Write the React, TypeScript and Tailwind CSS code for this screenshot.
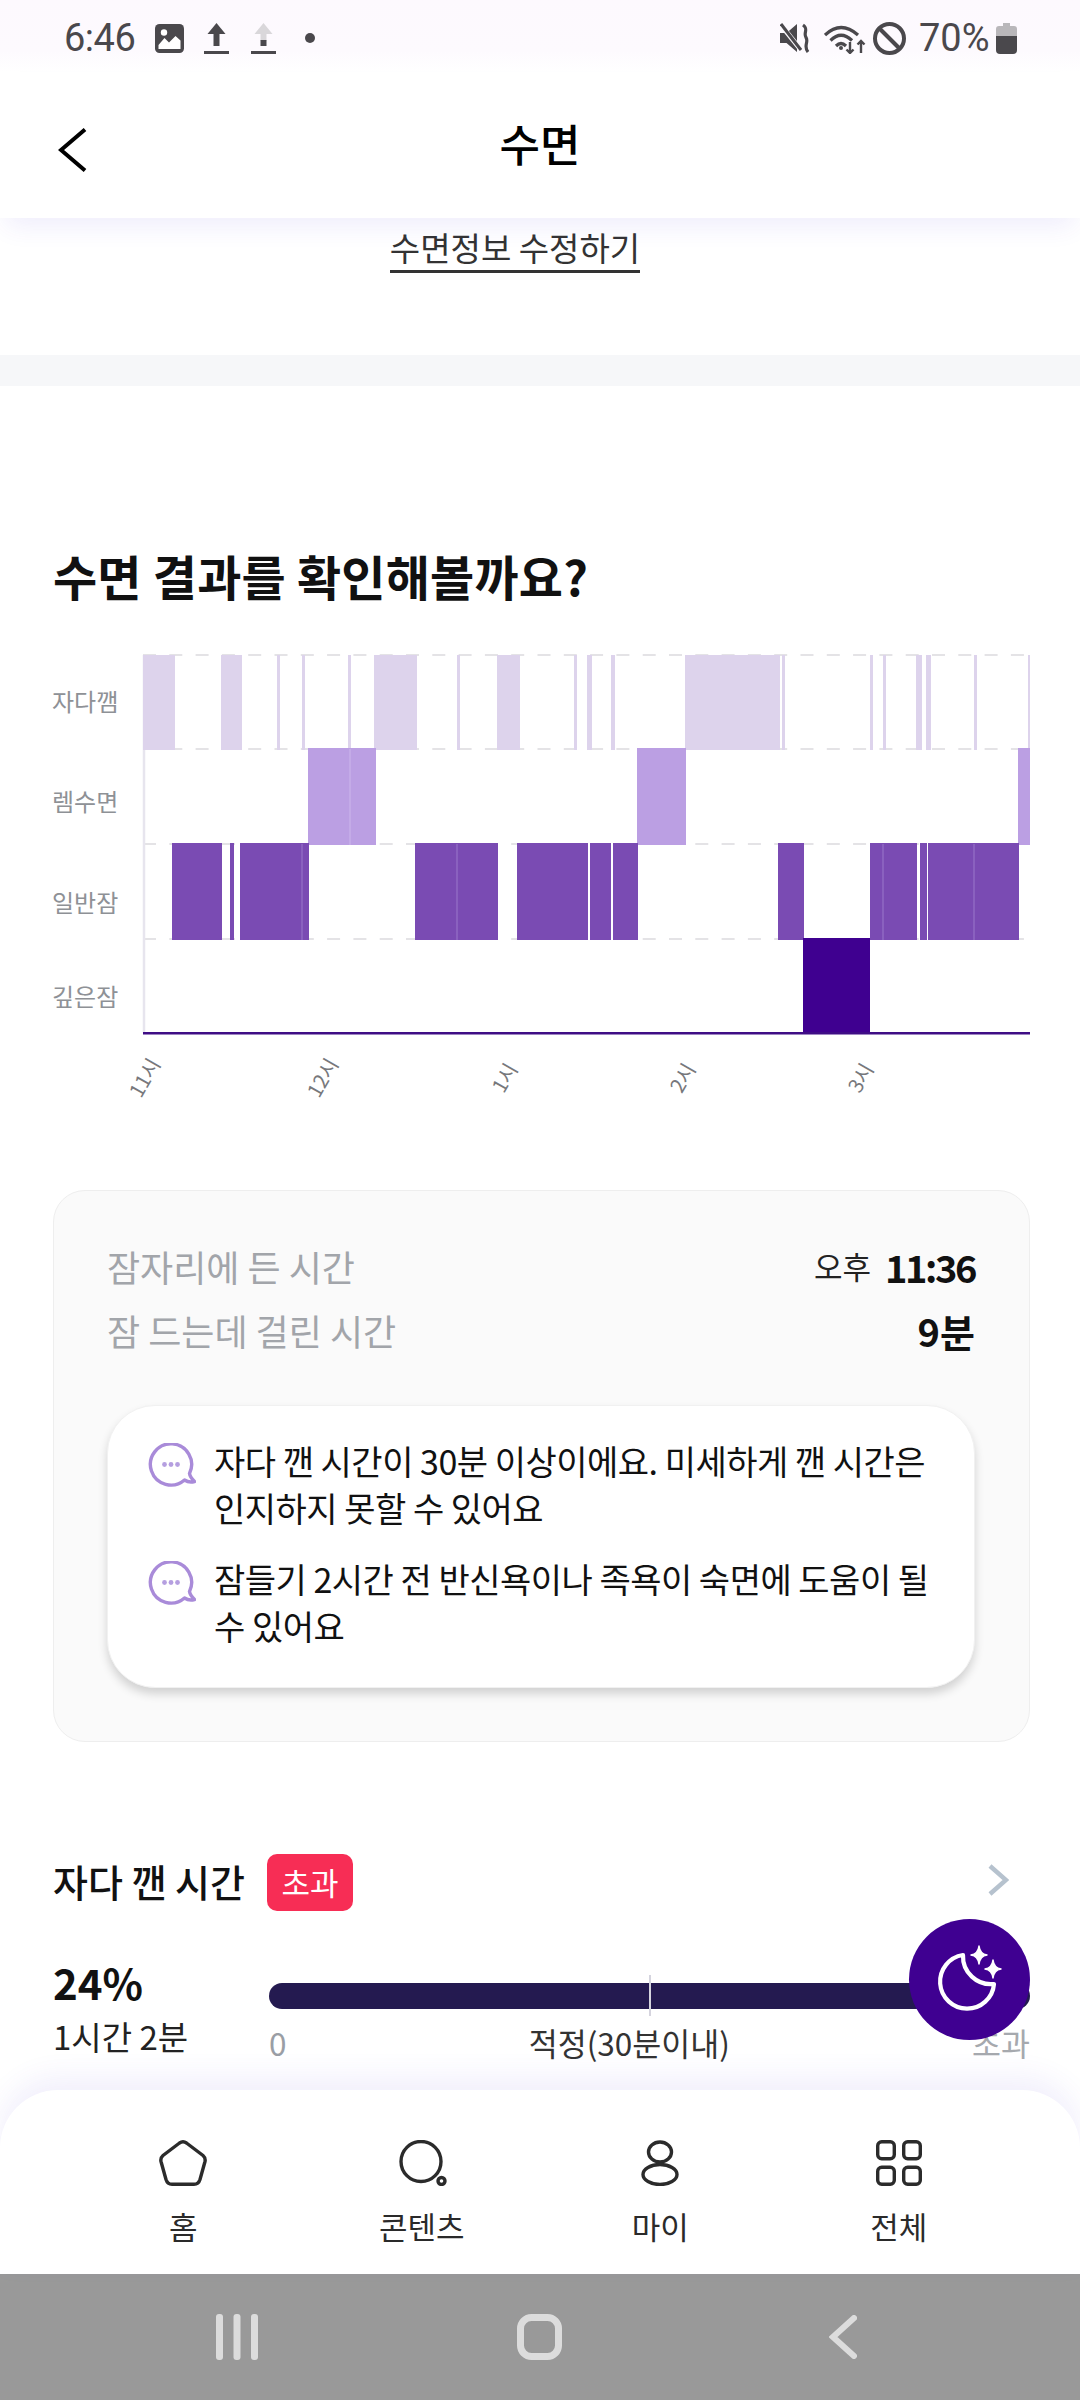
import React from "react";

const wake: [number, number][] = [[143,175],[221,242],[277,280],[302,305],[348,351],[374,417],[457,460],[497,520],[574,577],[587,592],[611,615],[685,780],[782,785],[870,873],[883,886],[916,922],[926,931],[974,977],[1028,1030]];
const rem: [number, number][] = [[308,376],[637,686],[1018,1030]];
const normal: [number, number][] = [[172,222],[230,234],[240,309],[415,498],[517,588],[590,611],[613,638],[778,804],[870,917],[920,927],[928,1019]];
const seams: [number, number, number, string][] = [[350,749,845,"#cdb7ec"],[302,844,940,"#9a78cb"],[457,844,940,"#9a78cb"],[883,844,940,"#9a78cb"],[974,844,940,"#9a78cb"]];
const rowLabels: [string, number][] = [["자다깸",703],["렘수면",803],["일반잠",904],["깊은잠",998]];
const hourLabels: [string, number][] = [["11시",145],["12시",323],["1시",505],["2시",683],["3시",861]];

function Chart() {
  return (
    <svg className="block mt-[23px]" width="1080" height="510" viewBox="0 620 1080 510">
      {[655, 749, 844, 939].map((y) => (
        <line key={y} x1="143" x2="1030" y1={y} y2={y} stroke="#e4e3e6" strokeWidth="2" strokeDasharray="13 13.3" />
      ))}
      <line x1="144" x2="144" y1="655" y2="1033" stroke="#e7e5ee" strokeWidth="2.5" />
      {wake.map(([a, b]) => <rect key={a} x={a} y="655" width={b - a} height="95" fill="#ddd3ec" />)}
      {rem.map(([a, b]) => <rect key={a} x={a} y="748" width={b - a} height="97" fill="#bb9fe3" />)}
      {normal.map(([a, b]) => <rect key={a} x={a} y="843" width={b - a} height="97" fill="#7a4bb3" />)}
      <rect x="803" y="938" width="67" height="95" fill="#3f0090" />
      {seams.map(([x, y1, y2, c]) => <line key={x} x1={x} x2={x} y1={y1} y2={y2} stroke={c} strokeWidth="1" />)}
      <rect x="143" y="1032" width="887" height="2.5" fill="#3f0d85" />
      {rowLabels.map(([t, y]) => (
        <text key={t} x="52" y={y + 8} fontSize="24" fill="#8e9196">{t}</text>
      ))}
      {hourLabels.map(([t, x]) => (
        <text key={t} x={x} y="1085" fontSize="20" fill="#77787c" textAnchor="middle" transform={`rotate(-60 ${x} 1078)`}>{t}</text>
      ))}
    </svg>
  );
}

function UploadIcon({ faded }: { faded?: boolean }) {
  const top = faded ? "#d9d7da" : "#4a484c";
  return (
    <svg width="25" height="31" viewBox="0 0 25 31">
      <path d="M12.5 0 21.5 11H3.5Z" fill={top} />
      <rect x="9.5" y="10" width="6" height={faded ? 8 : 13} fill={top} />
      {faded && <rect x="9.5" y="17" width="6" height="6" fill="#4a484c" />}
      <rect x="0" y="28" width="25" height="3" fill="#4a484c" />
    </svg>
  );
}

function StatusBar() {
  return (
    <div className="h-[72px] shrink-0 pt-[4px] bg-gradient-to-b from-[#fdf9fe] via-[#fdfafe] via-70% to-white flex items-center justify-between pl-[64px] pr-[63px] text-[#4a484c] font-['Roboto',sans-serif]">
      <div className="flex items-center">
        <span className="text-[38px] leading-none tracking-[-0.5px] w-[91px]">6:46</span>
        <svg width="29" height="29" viewBox="0 0 29 29">
          <rect width="29" height="29" rx="4.5" fill="#4a484c" />
          <circle cx="9" cy="8.5" r="3.2" fill="#fff" />
          <path d="M3.5 21 9.5 14 14 18.5 20.5 12 25.5 16.5V25H3.5Z" fill="#fff" />
        </svg>
        <span className="ml-[20px] flex"><UploadIcon /></span>
        <span className="ml-[22px] flex"><UploadIcon faded /></span>
        <span className="ml-[29px] w-[10px] h-[10px] rounded-full bg-[#4a484c]" />
      </div>
      <div className="flex items-center">
        <svg width="30" height="30" viewBox="0 0 30 30" fill="none">
          <path d="M0 10H6.5L17 1V29L6.5 20H0Z" fill="#4a484c" />
          <path d="M1 2 21 27" stroke="#fdfafe" strokeWidth="5" />
          <path d="M1 1 21 27" stroke="#4a484c" strokeWidth="3" />
          <path d="M23 2C29 6 23 10 26 14.5 29 19 23 23 28 29" stroke="#4a484c" strokeWidth="3.2" />
        </svg>
        <svg className="ml-[14px]" width="42" height="31" viewBox="0 0 42 31" fill="none" stroke="#4a484c" strokeWidth="3.2">
          <path d="M1 12Q17 -3 34 12" />
          <path d="M6.5 17.5Q17 7 28 17.5" />
          <path d="M12 23Q17 18 22 23" />
          <circle cx="17" cy="25" r="2" fill="#4a484c" stroke="none" />
          <path d="M26 19V30M22.5 26.5 26 30 29.5 26.5M37 30V18M33.5 21.5 37 18 40.5 21.5" strokeWidth="2.4" />
        </svg>
        <svg className="ml-[7px]" width="33" height="33" viewBox="0 0 33 33" fill="none" stroke="#4a484c" strokeWidth="4">
          <circle cx="16.5" cy="16.5" r="14.5" />
          <path d="M6.5 6.5 26.5 26.5" />
        </svg>
        <span className="ml-[13px] text-[38px] leading-none w-[77px]">70%</span>
        <svg width="21" height="31" viewBox="0 0 21 31">
          <path d="M7 0H14V3H18Q21 3 21 6V14H0V6Q0 3 3 3H7Z" fill="#b9b7ba" />
          <path d="M0 13H21V27Q21 31 17 31H4Q0 31 0 27Z" fill="#4a484c" />
        </svg>
      </div>
    </div>
  );
}

function Header() {
  return (
    <header className="relative z-10 h-[146px] shrink-0 bg-white grid grid-cols-[1fr_auto_1fr] items-center shadow-[0_14px_24px_-6px_rgba(80,60,220,0.09)]">
      <svg className="ml-[58px] mt-[9px]" width="30" height="44" viewBox="0 0 30 44" fill="none" stroke="#000" strokeWidth="4">
        <path d="M27 1.5 3 22 27 42.5" />
      </svg>
      <h1 className="mb-[5px] text-[44px] leading-[48px] font-medium text-black">수면</h1>
      <span />
    </header>
  );
}

function TalkIcon() {
  return (
    <svg className="shrink-0 mt-[6px]" width="48" height="44" viewBox="0 0 48 44" fill="none">
      <path d="M36.5 37Q41 40 46.5 38.5 42 34 41.5 30.5A20.6 20.6 0 1 0 36.5 37Z" stroke="#a98bd9" strokeWidth="3.4" strokeLinejoin="round" />
      <circle cx="16.5" cy="21.5" r="2.4" fill="#b59fe0" />
      <circle cx="23" cy="21.5" r="2.4" fill="#b59fe0" />
      <circle cx="29.5" cy="21.5" r="2.4" fill="#b59fe0" />
    </svg>
  );
}

function ResultCard() {
  return (
    <section className="ml-[53px] mr-[50px] h-[552px] rounded-[32px] border border-[#eeeeee] bg-[#fafafa] pt-[43px] pl-[53px] pr-[54px]">
      <div className="flex justify-between items-center h-[64px]">
        <span className="text-[36px] text-[#a2a5aa]">잠자리에 든 시간</span>
        <span className="flex items-center">
          <span className="text-[31px] text-[#222] mr-[14px]">오후</span>
          <span className="text-[38px] font-bold text-[#111] tracking-[-2.4px]">11:36</span>
        </span>
      </div>
      <div className="flex justify-between items-center h-[64px]">
        <span className="text-[36px] text-[#a2a5aa]">잠 드는데 걸린 시간</span>
        <span className="text-[38px] font-bold text-[#111]">9분</span>
      </div>
      <div className="mt-[43px] h-[283px] rounded-[48px] bg-white pt-[31px] pl-[40px] pr-[30px] flex flex-col gap-[24px] border border-[#f1f1f1] shadow-[0_6px_10px_rgba(0,0,0,0.16)]">
        <div className="flex gap-[18px]">
          <TalkIcon />
          <p className="text-[34px] leading-[47px] tracking-[-0.5px] text-[#111] break-keep">자다 깬 시간이 30분 이상이에요. 미세하게 깬 시간은 인지하지 못할 수 있어요</p>
        </div>
        <div className="flex gap-[18px]">
          <TalkIcon />
          <p className="text-[34px] leading-[47px] tracking-[-0.5px] text-[#111] break-keep">잠들기 2시간 전 반신욕이나 족욕이 숙면에 도움이 될 수 있어요</p>
        </div>
      </div>
    </section>
  );
}

function AwakeSection() {
  return (
    <section className="ml-[53px] mr-[50px] mt-[112px]">
      <div className="flex items-center justify-between h-[57px] pr-[21px]">
        <div className="flex items-center gap-[22px]">
          <h3 className="mb-[4px] text-[38px] leading-[50px] font-medium text-[#111]">자다 깬 시간</h3>
          <span className="w-[86px] h-[57px] rounded-[10px] bg-[#f72d55] text-white text-[31px] flex items-center justify-center">초과</span>
        </div>
        <svg className="mb-[5px]" width="21" height="32" viewBox="0 0 21 32" fill="none" stroke="#b6c2ce" strokeWidth="4.5">
          <path d="M2 2 18 16 2 30" />
        </svg>
      </div>
      <div className="flex mt-[49px]">
        <div className="w-[216px] shrink-0">
          <div className="text-[42px] leading-[44px] font-bold text-[#111]">24%</div>
          <div className="text-[33px] leading-[44px] mt-[10px] text-[#222]">1시간 2분</div>
        </div>
        <div className="flex-1 pt-[23px]">
          <div className="relative h-[26px] rounded-full bg-[#241a50]">
            <span className="absolute left-[380px] top-[-8px] w-[2px] h-[41px] bg-[#d5d4de]" />
          </div>
          <div className="mt-[13px] flex justify-between text-[31.5px] leading-[40px]">
            <span className="text-[#9a9ea5]">0</span>
            <span className="text-[#333]">적정(30분이내)</span>
            <span className="text-[#a6a9ae]">초과</span>
          </div>
        </div>
      </div>
    </section>
  );
}

function Fab() {
  return (
    <button className="absolute z-20 left-[909px] top-[1919px] w-[121px] h-[121px] rounded-full bg-[#3f0091] flex items-center justify-center">
      <svg width="121" height="121" viewBox="0 0 121 121" fill="none">
        <path d="M54 36A27 27 0 1 0 85 65 28 28 0 0 1 54 36Z" stroke="#fff" strokeWidth="4.2" strokeLinejoin="round" />
        <path d="M70 27Q71 35 78 36 71 37 70 45 69 37 62 36 69 35 70 27Z" fill="#fff" stroke="#fff" strokeWidth="1.5" strokeLinejoin="round" />
        <path d="M84 41Q85 49 92 50 85 51 84 59 83 51 76 50 83 49 84 41Z" fill="#fff" stroke="#fff" strokeWidth="1.5" strokeLinejoin="round" />
      </svg>
    </button>
  );
}

function NavItem({ label, children }: { label: string; children: React.ReactNode }) {
  return (
    <div className="flex flex-col items-center">
      <div className="h-[46px] flex items-center justify-center">{children}</div>
      <span className="mt-[20px] text-[31px] leading-[40px] text-[#2a2a2a]">{label}</span>
    </div>
  );
}

function BottomNav() {
  const s = { fill: "none", stroke: "#2b2b2b", strokeWidth: 3.4 };
  return (
    <nav className="relative z-10 h-[184px] shrink-0 bg-white rounded-t-[58px] pt-[50px] pl-[64px] pr-[62px] grid grid-cols-4 shadow-[0_-14px_28px_rgba(90,70,220,0.08)]">
      <NavItem label="홈">
        <svg width="48" height="46" viewBox="0 0 48 46">
          <path {...s} d="M20.5 3Q24 .5 27.500 3L44 15.500Q46.800 18 46 21.500L41 39.500Q39.500 44.300 35 44.300H13Q8.500 44.300 7 39.500L2 21.500Q1.200 18 4 15.500Z" />
        </svg>
      </NavItem>
      <NavItem label="콘텐츠">
        <svg width="50" height="46" viewBox="0 0 50 46">
          <circle {...s} cx="24" cy="21.500" r="20" />
          <circle {...s} cx="44.500" cy="41" r="3.500" />
        </svg>
      </NavItem>
      <NavItem label="마이">
        <svg width="38" height="46" viewBox="0 0 38 46">
          <ellipse {...s} cx="19" cy="12" rx="11.500" ry="10" />
          <ellipse {...s} cx="19" cy="34.500" rx="17" ry="10" />
        </svg>
      </NavItem>
      <NavItem label="전체">
        <svg width="46" height="46" viewBox="0 0 46 46">
          <rect {...s} x="1.700" y="1.700" width="16.600" height="17" rx="4" />
          <rect {...s} x="27.700" y="1.700" width="16.600" height="17" rx="4" />
          <rect {...s} x="1.700" y="27.300" width="16.600" height="17" rx="4" />
          <rect {...s} x="27.700" y="27.300" width="16.600" height="17" rx="4" />
        </svg>
      </NavItem>
    </nav>
  );
}

function SystemBar() {
  return (
    <div className="h-[126px] shrink-0 bg-[#999999] grid grid-cols-3 px-[86px] items-center justify-items-center">
      <svg width="43" height="46" viewBox="0 0 43 46" fill="#dcdcdc">
        <rect x="0" y="0" width="7" height="46" rx="3" />
        <rect x="17.500" y="0" width="7" height="46" rx="3" />
        <rect x="35" y="0" width="7" height="46" rx="3" />
      </svg>
      <svg width="45" height="46" viewBox="0 0 45 46" fill="none" stroke="#dcdcdc" strokeWidth="7">
        <rect x="3.500" y="3.500" width="38" height="39" rx="11" />
      </svg>
      <svg width="28" height="44" viewBox="0 0 28 44" fill="none" stroke="#dcdcdc" strokeWidth="6" strokeLinecap="round">
        <path d="M25 3 4 22 25 41" />
      </svg>
    </div>
  );
}

export default function App() {
  return (
    <div className="relative w-[1080px] h-[2400px] overflow-hidden bg-white flex flex-col font-['Noto_Sans_CJK_KR',sans-serif]">
      <StatusBar />
      <Header />
      <main className="flex-1 min-h-0 overflow-hidden">
        <div className="h-[137px] pt-[9px] flex justify-center pr-[50px]">
          <a className="h-[46px] text-[33px] leading-[40px] text-[#333] border-b-[3px] border-[#333]">수면정보 수정하기</a>
        </div>
        <div className="h-[31px] bg-[#f6f7f9]" />
        <h2 className="mt-[167px] ml-[53px] text-[48px] leading-[44px] tracking-[0.2px] font-semibold text-[#111]">수면 결과를 확인해볼까요?</h2>
        <Chart />
        <div className="mt-[60px]" />
        <ResultCard />
        <AwakeSection />
      </main>
      <Fab />
      <BottomNav />
      <SystemBar />
    </div>
  );
}
